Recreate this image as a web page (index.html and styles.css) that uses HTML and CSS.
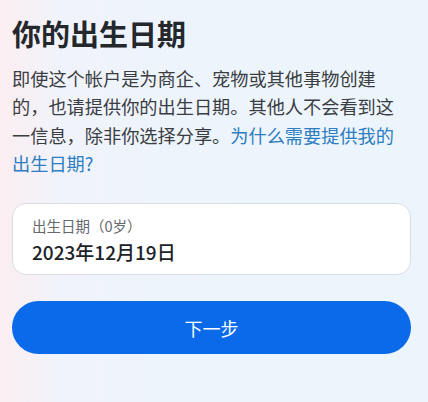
FILE: index.html
```html
<!DOCTYPE html>
<html lang="zh-CN">
<head>
<meta charset="utf-8">
<title>你的出生日期</title>
<link rel="stylesheet" href="styles.css">
</head>
<body>
<main class="page">
  <h1 class="title">你的出生日期</h1>
  <p class="desc">即使这个帐户是为商企、宠物或其他事物创建的，也请提供你的出生日期。其他人不会看到这一信息，除非你选择分享。<a class="link" href="#">为什么需要提供我的出生日期?</a></p>
  <div class="field">
    <div class="field-label">出生日期（0岁）</div>
    <div class="field-value">2023年12月19日</div>
  </div>
  <button class="next" type="button">下一步</button>
</main>
</body>
</html>
```
FILE: styles.css
```css
html, body {
  margin: 0;
  height: 100%;
}
body {
  font-family: "Noto Sans CJK SC", "Noto Sans", sans-serif;
  background: linear-gradient(90deg, #fbeef1 0%, #f1f3fb 14%, #edf4fc 40%, #ecf4fc 100%);
  color: #1c1e21;
}
.page {
  display: flex;
  flex-direction: column;
  padding: 15px 17px 0 12px;
}
.title {
  margin: 0;
  font-size: 29px;
  line-height: 36px;
  font-weight: 700;
  color: #24272b;
}
.desc {
  margin: 13px 0 0;
  max-width: 392px;
  font-size: 18.2px;
  line-height: 28.3px;
  color: #3a3d42;
}
.link {
  color: #2d7dc2;
  text-decoration: none;
}
.field {
  margin-top: 26px;
  height: 72px;
  box-sizing: border-box;
  background: #ffffff;
  border: 1px solid #d9dde3;
  border-radius: 14px;
  padding: 12px 19px 0;
  display: flex;
  flex-direction: column;
}
.field-label {
  font-size: 14.5px;
  line-height: 20px;
  color: #65686d;
}
.field-value {
  margin-top: 3px;
  font-size: 19px;
  line-height: 26px;
  font-weight: 500;
  color: #202226;
}
.next {
  margin-top: 26px;
  height: 53px;
  border: none;
  border-radius: 27px;
  background: #0a6aea;
  color: #ffffff;
  font-family: inherit;
  font-size: 18px;
  font-weight: 400;
  padding: 0;
}
```
